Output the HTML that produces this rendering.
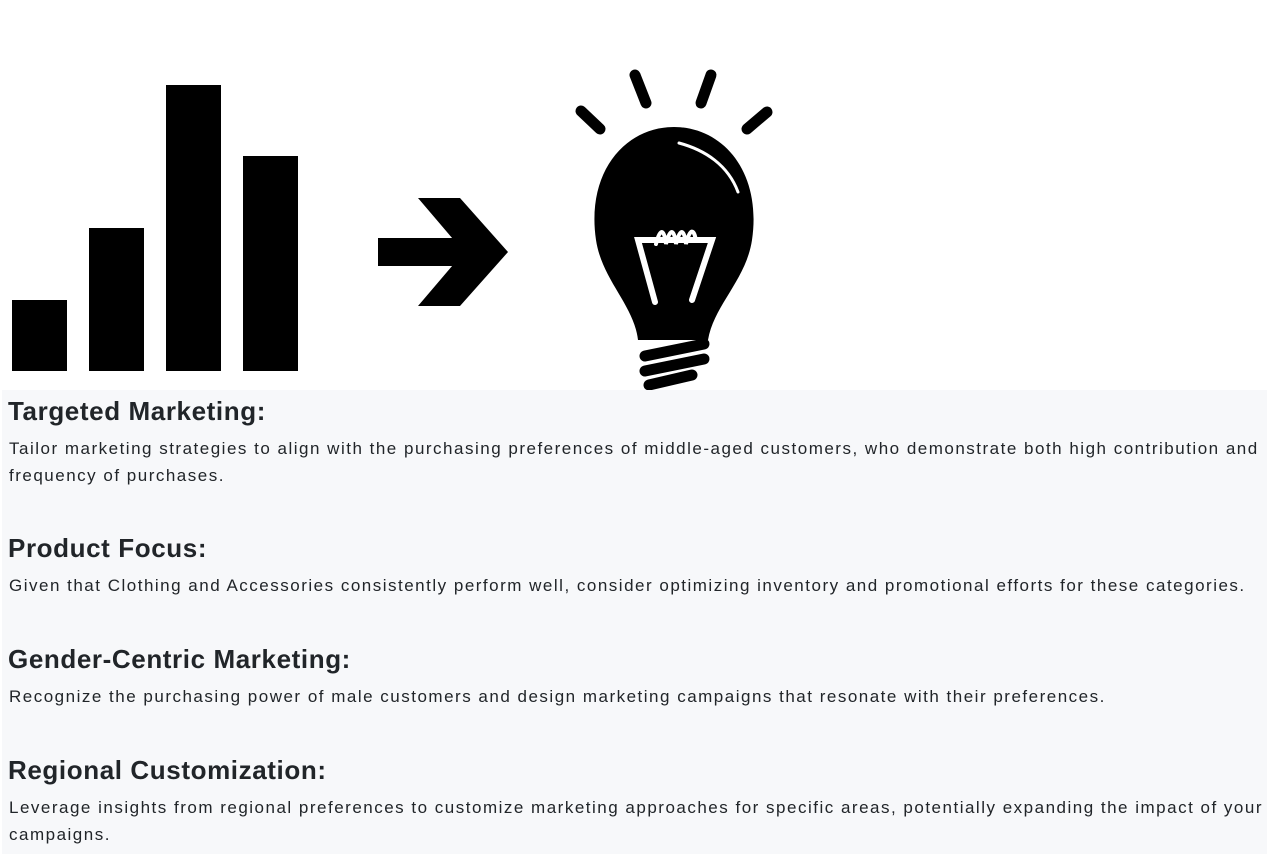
<!DOCTYPE html>
<html><head><meta charset="utf-8"><style>
body{margin:0;width:1267px;height:854px;background:#fff;overflow:hidden;font-family:"Liberation Sans",sans-serif;color:#212529}
svg{position:absolute;left:0;top:0}
.panel{position:absolute;left:2px;top:390px;width:1265px;height:464px;background:#f7f8fa}
h2{position:absolute;left:8px;margin:0;font-size:26px;font-weight:bold;letter-spacing:0.6px;line-height:30px;white-space:nowrap}
p{position:absolute;left:9px;margin:0;font-size:17px;letter-spacing:1.5px;line-height:27px;width:1258px}
</style></head><body>
<svg width="800" height="392" viewBox="0 0 800 392">
<rect x="12" y="300" width="55" height="71"/>
<rect x="89" y="228" width="55" height="143"/>
<rect x="166" y="85" width="55" height="286"/>
<rect x="243" y="156" width="55" height="215"/>
<rect x="378" y="238" width="90" height="28"/>
<polygon points="418,198 460,198 508,252 460,306 418,306 464,252"/>
<g stroke="#000" stroke-width="11" stroke-linecap="round">
<line x1="581" y1="111" x2="600" y2="129"/>
<line x1="635" y1="75" x2="646" y2="103"/>
<line x1="711" y1="75" x2="701" y2="103"/>
<line x1="767" y1="112" x2="747" y2="129"/>
<line x1="645" y1="356" x2="704" y2="344"/>
<line x1="645" y1="371" x2="704" y2="359"/>
<line x1="649" y1="385" x2="692" y2="375"/>
</g>
<path d="M638 340 C634 305,602 280,596 240 C586 172,625 127,674 127 C723 127,762 172,752 240 C746 280,714 305,708 340 Z"/>
<g fill="none" stroke="#fff" stroke-width="6" stroke-linecap="round">
<path d="M655 302 L638 240 L712 240 L692 300"/>
<path d="M656 244 C660 228,664 228,666 244 C670 228,674 228,676 244 C680 228,684 228,686 244 C690 228,694 228,696 241" stroke-width="4"/>
<path d="M679 143 C705 150,728 165,738 192" stroke-width="3"/>
</g>
</svg>
<div class="panel"></div>
<h2 style="top:396px">Targeted Marketing:</h2>
<p style="top:435px">Tailor marketing strategies to align with the purchasing preferences of middle-aged customers, who demonstrate both high contribution and frequency of purchases.</p>
<h2 style="top:533px">Product Focus:</h2>
<p style="top:572px">Given that Clothing and Accessories consistently perform well, consider optimizing inventory and promotional efforts for these categories.</p>
<h2 style="top:644px">Gender-Centric Marketing:</h2>
<p style="top:683px">Recognize the purchasing power of male customers and design marketing campaigns that resonate with their preferences.</p>
<h2 style="top:755px">Regional Customization:</h2>
<p style="top:794px">Leverage insights from regional preferences to customize marketing approaches for specific areas, potentially expanding the impact of your campaigns.</p>
</body></html>
